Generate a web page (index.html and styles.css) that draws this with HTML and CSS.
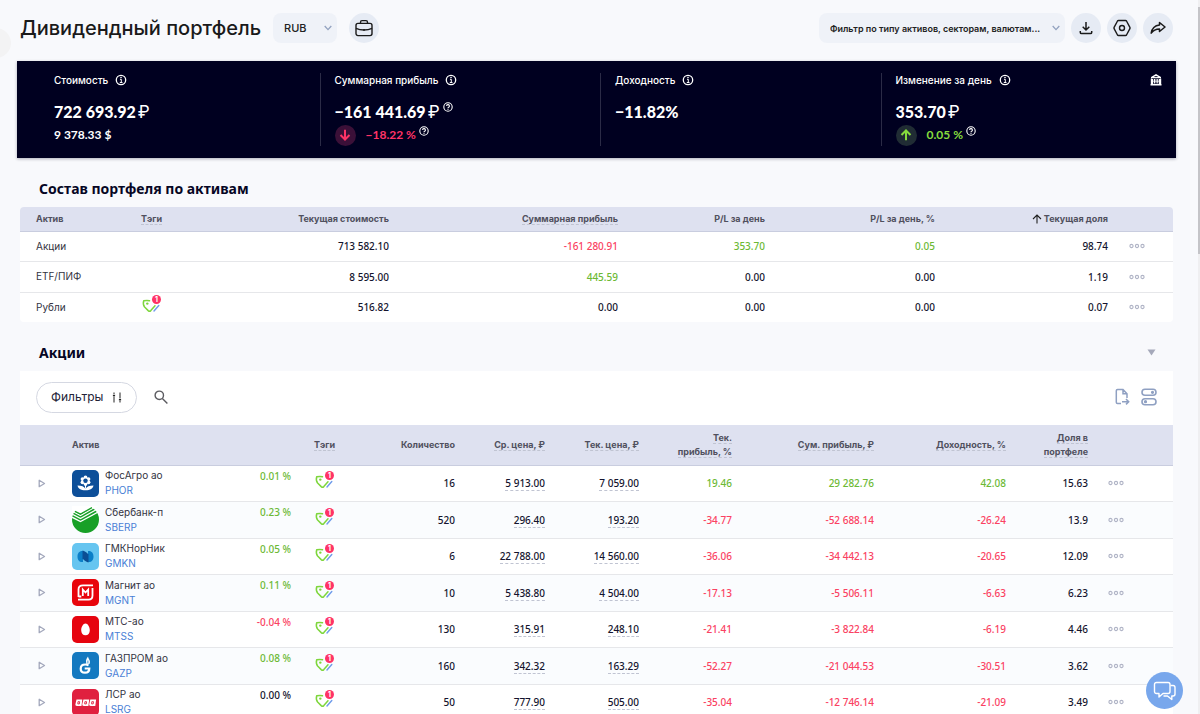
FILE: index.html
```html
<!DOCTYPE html>
<html lang="ru">
<head>
<meta charset="utf-8">
<title>Дивидендный портфель</title>
<link rel="stylesheet" href="styles.css">
</head>
<body>
<svg class="sprite" aria-hidden="true">
  <symbol id="chevron" viewBox="0 0 8 6"><path d="M.7 1 4 4.600 7.300 1" fill="none" stroke="#92a2bf" stroke-width="1.300"/></symbol>
  <symbol id="info" viewBox="0 0 12 12"><circle cx="6" cy="6" r="4.700" fill="none" stroke="#fff" stroke-width="1.300"/><path d="M5 5.300h1.300v3M4.800 8.500h2.700" fill="none" stroke="#fff" stroke-width="1"/><circle cx="6" cy="3.500" r=".8" fill="#fff"/></symbol>
  <symbol id="help" viewBox="0 0 10 10"><circle cx="5" cy="5" r="4.200" fill="none" stroke="#fff" stroke-width="1.100"/><path d="M3.600 4a1.400 1.400 0 1 1 2 1.300c-.5.2-.6.4-.6.9" fill="none" stroke="#fff" stroke-width="1.100"/><circle cx="5" cy="7.300" r=".6" fill="#fff"/></symbol>
  <symbol id="tag" viewBox="0 0 20 20"><path d="M8.500 4.700C6.500 4.200 4.500 4.400 2.700 4.700 2 7 2.300 9.200 3.600 11L7.200 14.600c.9.800 1.800.8 2.600 0L14 9.800" fill="none" stroke="#7ed63c" stroke-width="1.500" stroke-linecap="round" stroke-linejoin="round"/><circle cx="6.300" cy="7.600" r="1.200" fill="#7ed63c"/><path d="M13 15 17.800 9.500" stroke="#6f9ceb" stroke-width="1.400" stroke-linecap="round"/></symbol>
  <symbol id="dots" viewBox="0 0 16 6"><g fill="none" stroke="#b0b4c6" stroke-width="1.100"><circle cx="2.500" cy="3" r="1.600"/><circle cx="8" cy="3" r="1.600"/><circle cx="13.500" cy="3" r="1.600"/></g></symbol>
  <symbol id="play" viewBox="0 0 8 9"><path d="M1.200 1.300v6.400L6.500 4.500z" fill="none" stroke="#a3a8bc" stroke-width="1.300" stroke-linejoin="round"/></symbol>
</svg>

<div class="page">
  <button class="edge-handle" aria-label="Открыть меню"></button>

  <header class="topbar">
    <h1 class="title">Дивидендный портфель</h1>
    <div class="select currency">
      <select class="select-box" aria-label="Валюта"><option>RUB</option></select>
      <svg class="chevron"><use href="#chevron"/></svg>
    </div>
    <button class="round" aria-label="Портфели">
      <svg width="18" height="18" viewBox="0 0 18 18" fill="none" stroke="#1a1a1a" stroke-width="1.400"><rect x="1" y="4.400" width="16" height="12.200" rx="2"/><path d="M5.500 4.200V3.200c0-1 .5-1.600 1.500-1.600h4c1 0 1.500.6 1.500 1.600v1M1 9.300c2.500 1.200 5 1.700 8 1.700s5.500-.5 8-1.700M9 10v2"/></svg>
    </button>
    <div class="select filter">
      <select class="select-box" aria-label="Фильтр"><option>Фильтр по типу активов, секторам, валютам...</option></select>
      <svg class="chevron"><use href="#chevron"/></svg>
    </div>
    <div class="actions">
      <button class="round" aria-label="Скачать">
        <svg width="14" height="14" viewBox="0 0 14 14" fill="none" stroke="#1a1a1a" stroke-width="1.500"><path d="M7 1v8M3.700 5.800 7 9l3.300-3.200M1.300 10v1.500c0 .7.4 1.100 1.200 1.100h9c.8 0 1.200-.4 1.200-1.100V10"/></svg>
      </button>
      <button class="round" aria-label="Настройки">
        <svg width="18" height="18" viewBox="0 0 18 18" fill="none" stroke="#1a1a1a" stroke-width="1.400"><path d="M5.500 1.500h7c.5 0 .8.200 1 .5l3.400 6.300c.2.500.2.900 0 1.400L13.500 16c-.2.300-.5.500-1 .5h-7c-.5 0-.8-.2-1-.5L1.100 9.700c-.2-.5-.2-.9 0-1.400L4.500 2c.2-.3.500-.5 1-.5z"/><circle cx="9" cy="9" r="2.500"/></svg>
      </button>
      <button class="round" aria-label="Поделиться">
        <svg width="16" height="14" viewBox="0 0 16 14" fill="none" stroke="#1a1a1a" stroke-width="1.500" stroke-linejoin="round"><path d="M9.500 1.500 15 6l-5.500 4.500V8C6 8 3.500 8.800 1.200 12.200 2 7 5 4.500 9.500 4z"/></svg>
      </button>
    </div>
  </header>

  <section class="summary">
    <div class="metric">
      <div class="metric-label">Стоимость <svg class="info"><use href="#info"/></svg></div>
      <div class="metric-value">722 693.92<span class="ruble">₽</span></div>
      <div class="metric-sub">9 378.33 $</div>
    </div>
    <div class="metric">
      <div class="metric-label">Суммарная прибыль <svg class="info"><use href="#info"/></svg></div>
      <div class="metric-value">−161 441.69<span class="ruble">₽</span><svg class="help"><use href="#help"/></svg></div>
      <div class="metric-sub down"><span class="trend"><svg width="12" height="12" viewBox="0 0 12 12" fill="none" stroke="currentColor" stroke-width="2"><path d="M6 .8v10M1.500 6 6 10.500 10.500 6"/></svg></span>−18.22 %<svg class="help"><use href="#help"/></svg></div>
    </div>
    <div class="metric">
      <div class="metric-label">Доходность <svg class="info"><use href="#info"/></svg></div>
      <div class="metric-value">−11.82%</div>
    </div>
    <div class="metric">
      <div class="metric-label">Изменение за день <svg class="info"><use href="#info"/></svg>
        <svg class="bank" viewBox="0 0 12 12" fill="#fff"><path d="M6 0 1 3v1.300h10V3zM1.500 5h1.700v5H1.500zM8.800 5h1.700v5H8.800zM4 5h1v4.500H4zM5.600 5h.9v4.500h-.9zM7.200 5h.9v4.500h-.9zM3 6.800h6v.8H3zM.5 10h11v1.500H.5zM.8 4.500h.9v6H.8zM10.300 4.500h.9v6h-.9z"/><path d="M4.500 2.600h3" stroke="#000020" stroke-width=".9"/></svg>
      </div>
      <div class="metric-value">353.70<span class="ruble">₽</span></div>
      <div class="metric-sub up"><span class="trend"><svg width="12" height="12" viewBox="0 0 12 12" fill="none" stroke="currentColor" stroke-width="2"><path d="M6 11.200v-10M1.500 6 6 1.500 10.500 6"/></svg></span>0.05 %<svg class="help"><use href="#help"/></svg></div>
    </div>
  </section>

  <section class="block">
    <h2 class="block-title">Состав портфеля по активам</h2>
    <table class="grid assets">
      <colgroup><col class="w121"><col class="w60"><col class="w188"><col class="w229"><col class="w147"><col class="w170"><col class="w173"><col class="w65"></colgroup>
      <thead>
        <tr><th class="left">Актив</th><th class="tags"><span class="hint">Тэги</span></th><th>Текущая стоимость</th><th><span class="hint">Суммарная прибыль</span></th><th>P/L за день</th><th>P/L за день, %</th><th><svg class="sort" viewBox="0 0 10 10" fill="none" stroke="#222" stroke-width="1.100"><path d="M5 9.500V1M1 5l4-4 4 4"/></svg> Текущая доля</th><th></th></tr>
      </thead>
      <tbody>
        <tr><td class="left">Акции</td><td class="tags"></td><td>713 582.10</td><td class="neg">-161 280.91</td><td class="pos">353.70</td><td class="pos">0.05</td><td>98.74</td><td class="menu"><button class="more" aria-label="Ещё"><svg><use href="#dots"/></svg></button></td></tr>
        <tr><td class="left">ETF/ПИФ</td><td class="tags"></td><td>8 595.00</td><td class="pos">445.59</td><td>0.00</td><td>0.00</td><td>1.19</td><td class="menu"><button class="more" aria-label="Ещё"><svg><use href="#dots"/></svg></button></td></tr>
        <tr><td class="left">Рубли</td><td class="tags"><button class="tag" aria-label="Тэги"><svg><use href="#tag"/></svg><span class="badge">1</span></button></td><td>516.82</td><td>0.00</td><td>0.00</td><td>0.00</td><td>0.07</td><td class="menu"><button class="more" aria-label="Ещё"><svg><use href="#dots"/></svg></button></td></tr>
      </tbody>
    </table>
  </section>

  <section class="block">
    <div class="block-head">
      <h2 class="block-title">Акции</h2>
      <button class="collapse" aria-label="Свернуть"><svg width="9" height="7" viewBox="0 0 9 7"><path d="M.5.5h8L4.500 6.500z" fill="#a5a9ba"/></svg></button>
    </div>
    <div class="toolbar">
      <button class="pill">Фильтры
        <svg width="10" height="11" viewBox="0 0 10 11" fill="none" stroke="#222" stroke-width="1"><path d="M2 .5v1.500M2 4.500v6M8 .5v6M8 9v1.500"/><path d="M.9 3.500h2.200M6.900 7.800h2.200" stroke-width="1.600"/></svg>
      </button>
      <button class="plain" aria-label="Поиск"><svg width="14" height="14" viewBox="0 0 14 14" fill="none" stroke="#5b5b60" stroke-width="1.400"><circle cx="5.300" cy="5.300" r="4.200"/><path d="m8.400 8.400 5 5"/></svg></button>
      <span class="spacer"></span>
      <button class="plain" aria-label="Экспорт"><svg width="15" height="18" viewBox="0 0 15 18" fill="none" stroke="#8fa0c2" stroke-width="1.500"><path d="M6 15.500H2.500c-.8 0-1.200-.4-1.200-1.200V2.700c0-.8.4-1.200 1.200-1.200H8l4 4.200V10M8 1.500V5.700h4M7 13.700h6.500M11 11l2.700 2.700L11 16.400"/></svg></button>
      <button class="plain" aria-label="Вид таблицы"><svg width="16" height="18" viewBox="0 0 16 18" fill="none" stroke="#8fa0c2" stroke-width="1.600"><rect x="1" y="1.300" width="14" height="6" rx="3"/><rect x="1" y="10.700" width="14" height="6" rx="3"/><circle cx="11.500" cy="4.300" r=".8"/><circle cx="4.500" cy="13.700" r=".8"/></svg></button>
    </div>
    <table class="grid stocks">
      <colgroup><col class="w52"><col class="w133"><col class="w86"><col class="w44"><col class="w120"><col class="w90"><col class="w94"><col class="w93"><col class="w142"><col class="w132"><col class="w82"><col class="w85"></colgroup>
      <thead>
        <tr><th></th><th class="left">Актив</th><th></th><th><span class="hint">Тэги</span></th><th>Количество</th><th><span class="hint">Ср. цена, ₽</span></th><th><span class="hint">Тек. цена, ₽</span></th><th><span class="hint">Тек.<br>прибыль, %</span></th><th><span class="hint">Сум. прибыль, ₽</span></th><th><span class="hint">Доходность, %</span></th><th><span class="hint">Доля в<br>портфеле</span></th><th></th></tr>
      </thead>
      <tbody>
        <tr>
          <td class="expand"><button class="plain" aria-label="Развернуть"><svg class="play"><use href="#play"/></svg></button></td>
          <td class="left"><div class="asset"><svg class="logo" viewBox="0 0 27 27"><rect width="27" height="27" rx="5" fill="#0d4f99"/><g fill="#fff"><circle cx="13.500" cy="7.500" r="1.900"/><circle cx="10.500" cy="9.100" r="1.900"/><circle cx="16.500" cy="9.100" r="1.900"/><circle cx="10.500" cy="12.300" r="1.900"/><circle cx="16.500" cy="12.300" r="1.900"/><circle cx="13.500" cy="13.900" r="1.900"/><path d="M13 15h1v3.500h-1zM5.500 15.500c4 0 7 1 8 3.500 1-2.500 4-3.500 8-3.500-.5 3-3 4.800-8 4.800s-7.500-1.800-8-4.800z"/></g><circle cx="13.500" cy="10.700" r="2.200" fill="#0d4f99"/></svg><div class="names"><span>ФосАгро ао</span><a href="#phor">PHOR</a></div></div></td>
          <td class="pos day">0.01 %</td><td class="tags"><button class="tag" aria-label="Тэги"><svg><use href="#tag"/></svg><span class="badge">1</span></button></td>
          <td>16</td><td><span class="hint">5 913.00</span></td><td><span class="hint">7 059.00</span></td><td class="pos">19.46</td><td class="pos">29 282.76</td><td class="pos">42.08</td><td>15.63</td><td class="menu"><button class="more" aria-label="Ещё"><svg><use href="#dots"/></svg></button></td>
        </tr>
        <tr>
          <td class="expand"><button class="plain" aria-label="Развернуть"><svg class="play"><use href="#play"/></svg></button></td>
          <td class="left"><div class="asset"><svg class="logo" viewBox="0 0 27 27"><circle cx="13.500" cy="13.500" r="13.500" fill="#18a027"/><g fill="none" stroke="#fff" stroke-width="1.300"><path d="M-.5 4.700 8.500 9.500 23 1"/><path d="M0 8 8.500 12.500 25 3.200"/><path d="M0 11.200 8.500 15.500 27 5.500"/></g><path d="M0 0h27L8.500 7.700 0 4.500z" fill="#fff"/><path d="m3 5.300 5.500 2.800L20 1.600" fill="none" stroke="#18a027" stroke-width="1.300"/></svg><div class="names"><span>Сбербанк-п</span><a href="#sberp">SBERP</a></div></div></td>
          <td class="pos day">0.23 %</td><td class="tags"><button class="tag" aria-label="Тэги"><svg><use href="#tag"/></svg><span class="badge">1</span></button></td>
          <td>520</td><td><span class="hint">296.40</span></td><td><span class="hint">193.20</span></td><td class="neg">-34.77</td><td class="neg">-52 688.14</td><td class="neg">-26.24</td><td>13.9</td><td class="menu"><button class="more" aria-label="Ещё"><svg><use href="#dots"/></svg></button></td>
        </tr>
        <tr>
          <td class="expand"><button class="plain" aria-label="Развернуть"><svg class="play"><use href="#play"/></svg></button></td>
          <td class="left"><div class="asset"><svg class="logo" viewBox="0 0 27 27"><rect width="27" height="27" rx="5" fill="#66c5f0"/><path d="M11 8v11C7.500 19.500 5.500 17 5.500 13.500S7.500 7.500 11 8zM16 8v11c3.500.5 5.500-2 5.500-5.500S19.500 7.500 16 8z" fill="#0b7fc8"/><path d="M10.500 7.500c2 .3 3.500 1.500 6 4v8c-2-.3-3.500-1.500-6-4z" fill="#0b4e94"/></svg><div class="names"><span>ГМКНорНик</span><a href="#gmkn">GMKN</a></div></div></td>
          <td class="pos day">0.05 %</td><td class="tags"><button class="tag" aria-label="Тэги"><svg><use href="#tag"/></svg><span class="badge">1</span></button></td>
          <td>6</td><td><span class="hint">22 788.00</span></td><td><span class="hint">14 560.00</span></td><td class="neg">-36.06</td><td class="neg">-34 442.13</td><td class="neg">-20.65</td><td>12.09</td><td class="menu"><button class="more" aria-label="Ещё"><svg><use href="#dots"/></svg></button></td>
        </tr>
        <tr>
          <td class="expand"><button class="plain" aria-label="Развернуть"><svg class="play"><use href="#play"/></svg></button></td>
          <td class="left"><div class="asset"><svg class="logo" viewBox="0 0 27 27"><rect width="27" height="27" rx="5" fill="#e8050c"/><g fill="none" stroke="#fff" stroke-width="1.800"><path d="M21 6.300H11C8 6.300 6.500 8 6.500 10.500V18M6 20.700h10.500c3 0 4-1.700 4-4.200V9M6.500 17.500h2.800"/><path d="M10.800 17v-6.500l2.700 3 2.700-3V17"/></g></svg><div class="names"><span>Магнит ао</span><a href="#mgnt">MGNT</a></div></div></td>
          <td class="pos day">0.11 %</td><td class="tags"><button class="tag" aria-label="Тэги"><svg><use href="#tag"/></svg><span class="badge">1</span></button></td>
          <td>10</td><td><span class="hint">5 438.80</span></td><td><span class="hint">4 504.00</span></td><td class="neg">-17.13</td><td class="neg">-5 506.11</td><td class="neg">-6.63</td><td>6.23</td><td class="menu"><button class="more" aria-label="Ещё"><svg><use href="#dots"/></svg></button></td>
        </tr>
        <tr>
          <td class="expand"><button class="plain" aria-label="Развернуть"><svg class="play"><use href="#play"/></svg></button></td>
          <td class="left"><div class="asset"><svg class="logo" viewBox="0 0 27 27"><rect width="27" height="27" rx="5" fill="#e6040f"/><path d="M13.500 7.500c2.300 0 4.300 3.500 4.300 6.700 0 3-1.700 5-4.300 5s-4.300-2-4.300-5c0-3.200 2-6.700 4.300-6.700z" fill="#fff"/></svg><div class="names"><span>МТС-ао</span><a href="#mtss">MTSS</a></div></div></td>
          <td class="neg day">-0.04 %</td><td class="tags"><button class="tag" aria-label="Тэги"><svg><use href="#tag"/></svg><span class="badge">1</span></button></td>
          <td>130</td><td><span class="hint">315.91</span></td><td><span class="hint">248.10</span></td><td class="neg">-21.41</td><td class="neg">-3 822.84</td><td class="neg">-6.19</td><td>4.46</td><td class="menu"><button class="more" aria-label="Ещё"><svg><use href="#dots"/></svg></button></td>
        </tr>
        <tr>
          <td class="expand"><button class="plain" aria-label="Развернуть"><svg class="play"><use href="#play"/></svg></button></td>
          <td class="left"><div class="asset"><svg class="logo" viewBox="0 0 27 27"><rect width="27" height="27" rx="5" fill="#1479c0"/><path d="M16.500 13.500c-1-.8-2-1-3.200-1-2.800 0-4.600 1.700-4.600 4.200s1.700 4 4.300 4c2.500 0 4.300-1.400 4.300-4.200h-4.600" fill="none" stroke="#fff" stroke-width="2.200"/><path d="M16 4.500c-.8 1.300-2 2.700-2 4.500l.3 3h3.200c.5-1.300.6-2.300.2-3.500-.6-1.300-1.500-2.500-1.700-4z" fill="#fff"/><path d="M15.900 8.500v3" stroke="#1479c0" stroke-width=".8"/></svg><div class="names"><span>ГАЗПРОМ ао</span><a href="#gazp">GAZP</a></div></div></td>
          <td class="pos day">0.08 %</td><td class="tags"><button class="tag" aria-label="Тэги"><svg><use href="#tag"/></svg><span class="badge">1</span></button></td>
          <td>160</td><td><span class="hint">342.32</span></td><td><span class="hint">163.29</span></td><td class="neg">-52.27</td><td class="neg">-21 044.53</td><td class="neg">-30.51</td><td>3.62</td><td class="menu"><button class="more" aria-label="Ещё"><svg><use href="#dots"/></svg></button></td>
        </tr>
        <tr>
          <td class="expand"><button class="plain" aria-label="Развернуть"><svg class="play"><use href="#play"/></svg></button></td>
          <td class="left"><div class="asset"><svg class="logo" viewBox="0 0 27 27"><rect width="27" height="27" rx="5" fill="#e0203f"/><g fill="#fff"><path d="M4.500 10.500h5.800l-.8 6.500H5c-1.300 0-1.700-.7-1.600-1.700zM11.400 10.500h5.800l-.8 6.500h-4.500c-1.300 0-1.700-.7-1.600-1.700zM18.300 10.500h5.800l-.8 6.500h-4.500c-1.300 0-1.700-.7-1.600-1.700z"/></g><g fill="none" stroke="#e0203f" stroke-width=".9"><path d="M6 12.700h1.700l-.3 2.200H5.800zM12.900 12.700h1.700l-.3 2.200h-1.600zM19.800 12.700h1.700l-.3 2.200h-1.600z"/></g></svg><div class="names"><span>ЛСР ао</span><a href="#lsrg">LSRG</a></div></div></td>
          <td class="day">0.00 %</td><td class="tags"><button class="tag" aria-label="Тэги"><svg><use href="#tag"/></svg><span class="badge">1</span></button></td>
          <td>50</td><td><span class="hint">777.90</span></td><td><span class="hint">505.00</span></td><td class="neg">-35.04</td><td class="neg">-12 746.14</td><td class="neg">-21.09</td><td>3.49</td><td class="menu"><button class="more" aria-label="Ещё"><svg><use href="#dots"/></svg></button></td>
        </tr>
      </tbody>
    </table>
  </section>

  <div class="scroll-track"><div class="scroll-thumb"></div></div>
  <button class="chat" aria-label="Чат">
    <svg width="24" height="20" viewBox="0 0 24 20" fill="none" stroke="#fff" stroke-width="1.400" stroke-linejoin="round"><path d="M3.500 1.500h11.500c1.200 0 2 .8 2 2v7c0 1.200-.8 2-2 2H10l-4 3.500v-3.500H3.500c-1.200 0-2-.8-2-2v-7c0-1.200.8-2 2-2z"/><path d="M17.500 4.500h2.500c1.200 0 2 .8 2 2v6.500c0 1.200-.8 2-2 2h-1.200v3.500L14.500 15h-4"/></svg>
  </button>
</div>
</body>
</html>
```

FILE: styles.css
```css
* { box-sizing: border-box; }

body {
  margin: 0;
  background: #f8f9fc;
  color: #14142b;
  font: 10px/14px Inter, "Noto Sans", sans-serif;
}

button {
  display: flex;
  align-items: center;
  justify-content: center;
  margin: 0;
  padding: 0;
  border: 0;
  background: none;
  color: inherit;
  font: inherit;
}

.sprite { display: none; }
.page { position: relative; height: 100vh; overflow: hidden; }

.edge-handle {
  position: absolute;
  left: -19px;
  top: 28px;
  width: 30px;
  height: 30px;
  border-radius: 50%;
  background: #f3f3f4;
}

/* Top bar */
.topbar {
  display: flex;
  align-items: center;
  padding: 13px 27px 0 20px;
}
.title { margin: 0 12px 0 0; font-size: 20px; line-height: 30px; font-weight: 500; color: #1a1a1a; }

.select { position: relative; height: 30px; border-radius: 8px; background: #eff2f8; }
.select-box {
  width: 100%;
  height: 30px;
  padding: 0 20px 0 11px;
  border: 0;
  border-radius: 8px;
  background: transparent;
  appearance: none;
  color: #222;
  font: 500 11px Inter, sans-serif;
}
.select .chevron { position: absolute; right: 5px; top: 12px; width: 8px; height: 6px; pointer-events: none; }
.currency { width: 64px; margin-right: 12px; }
.filter { width: 246px; margin-left: auto; margin-right: 6px; }
.filter .select-box { font-size: 9px; font-weight: 600; }

.actions { display: flex; gap: 6px; }
.round { width: 30px; height: 30px; border-radius: 50%; background: #e6ebf4; }

/* Summary */
.summary {
  display: grid;
  grid-template-columns: repeat(4, 1fr);
  margin: 18px 24px 0 17px;
  padding: 12px 14px 12px 23px;
  background: #000020;
  color: #fff;
  box-shadow: 0 1px 3px rgba(0, 0, 32, .3);
}
.metric { padding-left: 14px; border-right: 1px solid #2b2b46; }
.metric:last-child { border-right: 0; }
.metric-label { display: flex; align-items: center; gap: 7px; height: 14px; font-weight: 500; }
.info { width: 12px; height: 12px; }
.bank { width: 12px; height: 12px; margin-left: auto; }
.metric-value { display: flex; margin-top: 13px; font: 900 16px/24px Lato, sans-serif; }
.ruble { margin-left: 2px; font: 400 17px/24px Inter, sans-serif; }
.metric-sub { display: flex; align-items: center; height: 22px; font: 700 12px/22px Lato, sans-serif; }
.help { width: 10px; height: 10px; margin: 2px 0 0 3px; align-self: flex-start; }
.trend { display: flex; align-items: center; justify-content: center; width: 21px; height: 21px; margin-right: 10px; border-radius: 50%; }
.down { color: #ff3366; }
.down .trend { background: #3b1038; }
.up { color: #86dc3d; }
.up .trend { background: #202c34; }

/* Sections */
.block { margin: 0 27px 0 20px; }
.block-title { margin: 0; padding: 21px 0 8px 19px; font: 700 14px/20px "Noto Sans", sans-serif; color: #060624; }
.block-head { display: flex; justify-content: space-between; }
.collapse { padding: 20px 17px 8px 0; }

.toolbar { display: flex; align-items: center; gap: 11px; height: 54px; padding: 0 16px 2px; background: #fff; }
.pill {
  gap: 9px;
  height: 31px;
  margin-right: 6px;
  padding: 0 14px;
  border: 1px solid #d5d8e2;
  border-radius: 16px;
  font-size: 12px;
  color: #222236;
}
.spacer { flex: 1; }

.grid { width: 100%; table-layout: fixed; border-collapse: collapse; background: #fff; }
.grid th { padding: 0; background: #dee1f0; border-bottom: 1px solid #c9cddf; color: #50505e; font-size: 9px; font-weight: 700; text-align: right; }
.grid td { padding: 0; border-bottom: 1px solid #e6e7ea; font: 500 10px/14px "Noto Sans", sans-serif; text-align: right; color: #14142e; white-space: nowrap; }
.grid .left { text-align: left; }
.grid td.left { font: 10px/15px Inter, sans-serif; color: #33333f; }
.grid td.pos { color: #6cb935; }
.grid td.neg { color: #fa4262; }
.hint { border-bottom: 1px dashed #c0c4d2; }
.sort { width: 10px; height: 10px; vertical-align: -2px; }

.assets { border-radius: 4px; overflow: hidden; }
.assets th { height: 24px; }
.assets td { height: 30px; }
.assets tr:nth-child(even) td { height: 31px; }
.assets tr:last-child td { border-bottom: 0; }
.assets .left { padding-left: 16px; }
.assets .tags { text-align: left; }

.stocks th { height: 40px; }
.stocks td { height: 36px; }
.stocks tr:nth-child(even) td { height: 37px; background: #fafcfe; }
.stocks .expand { padding-left: 18px; }
.stocks .day { padding-bottom: 15px; }
.play { width: 8px; height: 9px; }

.asset { display: flex; align-items: center; gap: 6px; }
.logo { width: 27px; height: 27px; }
.names { display: grid; }
.names a { color: #4a7fd6; text-decoration: none; }

.tag { position: relative; width: 20px; height: 20px; }
.tag svg { width: 20px; height: 20px; }
.grid td.tags { padding-bottom: 2px; }
.stocks .tag { margin-left: 23px; }
.badge {
  position: absolute;
  right: 0;
  top: -1px;
  width: 9px;
  height: 9px;
  border-radius: 50%;
  background: #ff3366;
  color: #fff;
  font: 700 7px/9px Inter, sans-serif;
  text-align: center;
}

.grid .menu { padding-left: 21px; }
.stocks .menu { padding-left: 20px; }
.more svg { width: 16px; height: 6px; }

.w121 { width: 121px; } .w60 { width: 60px; } .w188 { width: 188px; } .w229 { width: 229px; }
.w147 { width: 147px; } .w170 { width: 170px; } .w173 { width: 173px; } .w65 { width: 65px; }
.w52 { width: 52px; } .w133 { width: 133px; } .w86 { width: 86px; } .w44 { width: 44px; }
.w120 { width: 120px; } .w90 { width: 90px; } .w94 { width: 94px; } .w93 { width: 93px; }
.w142 { width: 142px; } .w132 { width: 132px; } .w82 { width: 82px; } .w85 { width: 85px; }

/* Floating parts */
.scroll-track { position: fixed; right: 0; top: 0; bottom: 0; width: 2px; padding-top: 7px; background: #efeff1; }
.scroll-thumb { height: 35%; background: #c4c4c8; }
.chat {
  position: fixed;
  right: 17px;
  bottom: 5px;
  width: 37px;
  height: 37px;
  border-radius: 50%;
  background: #78a7ec;
}
```
